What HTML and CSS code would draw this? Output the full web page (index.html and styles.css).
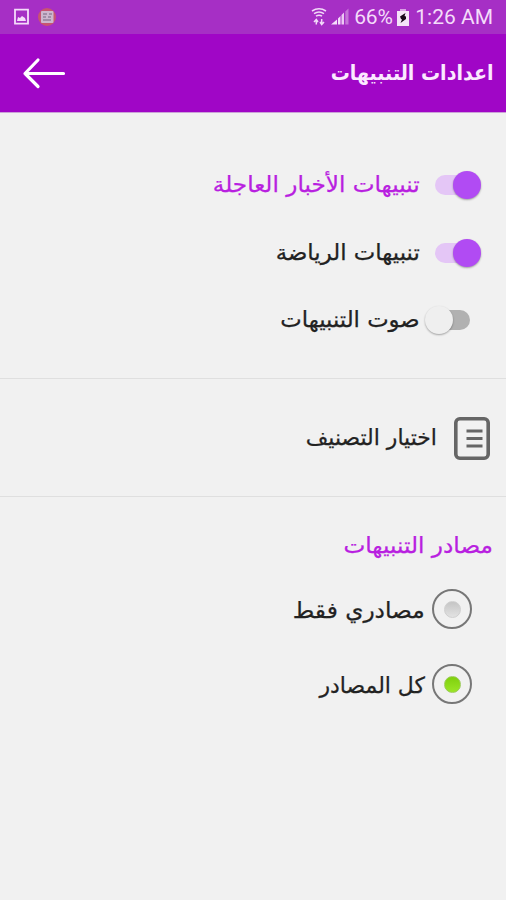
FILE: index.html
```html
<!DOCTYPE html>
<html lang="ar" dir="rtl">
<head>
<meta charset="utf-8">
<title>اعدادات التنبيهات</title>
<link rel="stylesheet" href="styles.css">
</head>
<body>
<div class="status" dir="ltr">
  <svg class="status-left" width="48" height="20" viewBox="0 0 48 20">
    <path d="M1 2.700h13v14H1z" fill="none" stroke="#f4dcfa" stroke-width="1.800"/>
    <path d="M3 14l1-4 2 1 2-2 3 2 1 3z" fill="#f4dcfa"/>
    <circle cx="33" cy="10" r="9" fill="#c85470"/>
    <rect x="27" y="4" width="12.500" height="12" rx="1" fill="#cdb6ce"/>
    <path d="M29 7h4M29 10h3M29 13h8M35 7h3M34 10h3" stroke="#93809b" stroke-width="1.300"/>
  </svg>
  <div class="status-right">
    <svg class="wifi" width="16" height="20" viewBox="0 0 16 20" fill="none" stroke="#f1d9f8" stroke-width="1.500">
      <path d="M1 4q7-4.500 14 0M3 6.600q5-3.400 10 0M5 9.200q3-2 6 0"/>
      <path d="M5.300 17.500v-5M3 15l2.300-2.500L7 15M10.700 12v5.500M9 15l1.700 2.500L13 15" stroke-width="1.500"/>
    </svg>
    <svg class="signal" width="18" height="20" viewBox="0 0 18 20">
      <path d="M0 17.500l6-5v5z M7 11.500l2.500-2.500v8.500H7z" fill="#f4dcfa"/>
      <path d="M10.500 8l2.500-2.500v12h-2.500z" fill="#ecc9f4"/>
      <path d="M14.300 4.500L17.500 1.500v16h-3.200z" fill="#c575d8"/>
    </svg>
    <span class="percent">66%</span>
    <svg class="battery" width="12" height="17" viewBox="0 0 12 17">
      <path d="M3 0h6v2H3z" fill="#d9a0e5"/>
      <path d="M0 2h12v15H0z" fill="#f4e3f8"/>
      <path d="M8.500 4L3 7.500 4 10l1 .5L3.500 14l5.500-4V7.500L7.500 7z" fill="#18071b"/>
    </svg>
    <span class="clock">1:26 AM</span>
  </div>
</div>
<header class="bar">
  <h1 class="label t-title">اعدادات التنبيهات</h1>
  <svg width="44" height="32" viewBox="0 0 44 32" fill="none" stroke="#fff" stroke-width="3.200" stroke-linecap="round" stroke-linejoin="round"><path d="M41.500 16.500H3M16 3L3 16.500l13 13"/></svg>
</header>
<main>
  <section class="toggles">
    <div class="row"><i class="switch on"></i><span class="label accent t-news">تنبيهات الأخبار العاجلة</span></div>
    <div class="row"><i class="switch on"></i><span class="label t-sport">تنبيهات الرياضة</span></div>
    <div class="row"><i class="switch"></i><span class="label t-sound">صوت التنبيهات</span></div>
  </section>
  <section class="category">
    <svg width="36" height="43" viewBox="0 0 36 43" fill="none" stroke="#666"><rect x="1.800" y="1.800" width="32.400" height="39.400" rx="4" stroke-width="3.600"/><path d="M12.500 14h16M12.500 21.500h16M12.500 29h16" stroke-width="3"/></svg>
    <span class="label t-category">اختيار التصنيف</span>
  </section>
  <section class="sources">
    <h2 class="label accent t-sources">مصادر التنبيهات</h2>
    <div class="choice"><i class="radio"></i><span class="label t-mine">مصادري فقط</span></div>
    <div class="choice"><i class="radio checked"></i><span class="label t-all">كل المصادر</span></div>
  </section>
</main>
</body>
</html>
```
FILE: styles.css
```css
* { box-sizing: border-box; }
body { margin: 0; height: 900px; overflow: hidden; background: #f1f1f1; color: #222; font-family: "DejaVu Sans", sans-serif; }
svg { display: block; flex: none; }
.status { display: flex; justify-content: space-between; height: 34px; padding: 7px 13px 0 14px; background: #a62fc5; }
.status-right { display: flex; height: 20px; color: #f4dcfa; font: 21px/21px Roboto, sans-serif; }
.wifi { margin-right: -1px; }
.signal { margin-left: 5px; }
.percent { width: 41px; margin-left: 5px; letter-spacing: -.2px; }
.battery { margin: 2px 6px 0 2px; }
.clock { white-space: nowrap; }
.bar { display: flex; justify-content: space-between; align-items: center; height: 79px; padding: 0 13px 0 22px; background: #a006c6; border-bottom: 1px solid #cba2d8; color: #fbe9ff; }
.label { display: block; width: fit-content; margin: 0; font-size: 22px; font-weight: 400; line-height: 32px; white-space: nowrap; transform-origin: right center; -webkit-text-stroke: .25px currentColor; }
.accent { color: #b820e0; }
.t-title { font-size: 21px; font-weight: 700; transform: scaleX(.907); -webkit-text-stroke: 0; }
.t-news { transform: scaleX(1.052); }
.t-sport { transform: scaleX(1.038); }
.t-sound { transform: scaleX(1.035); }
.t-category { transform: scaleX(.995); }
.t-sources { margin-bottom: 11px; transform: scaleX(1.053); }
.t-mine { transform: scaleX(1.058); }
.t-all { transform: scaleX(.995); }
.toggles { height: 266px; padding: 38.500px 25px 0 0; border-bottom: 1px solid #dfdfdf; }
.row { display: flex; align-items: center; height: 67.500px; gap: 15px; }
.switch { position: relative; width: 46px; height: 30px; flex: none; }
.switch::before { content: ""; position: absolute; top: 5px; right: 11px; width: 35px; height: 20px; border-radius: 10px; background: #b1b1b1; }
.switch::after { content: ""; position: absolute; top: 1px; right: 28px; width: 28px; height: 28px; border-radius: 50%; background: #efefef; box-shadow: 0 1px 2px #0005; }
.switch.on::before { right: 12px; width: 34px; background: #e4c6f6; }
.switch.on::after { right: 0; background: #b14bf3; }
.category { display: flex; align-items: center; height: 118px; padding: 1px 16px 0 0; gap: 17px; border-bottom: 1px solid #dfdfdf; }
.sources { padding: 33px 13px 0 0; }
.choice { display: flex; align-items: center; height: 75px; padding-right: 21px; gap: 7px; }
.radio { display: grid; place-items: center; width: 40px; height: 40px; margin-bottom: 3px; border: 2px solid #777; border-radius: 50%; }
.radio::before { content: ""; width: 15px; height: 15px; border-radius: 50%; background: linear-gradient(#c5c5c5, #e2e2e2); border: 1px solid #cfcfcf; }
.radio.checked::before { background: linear-gradient(#7fd00d, #9be526); border-color: #9bcb57; }
```
